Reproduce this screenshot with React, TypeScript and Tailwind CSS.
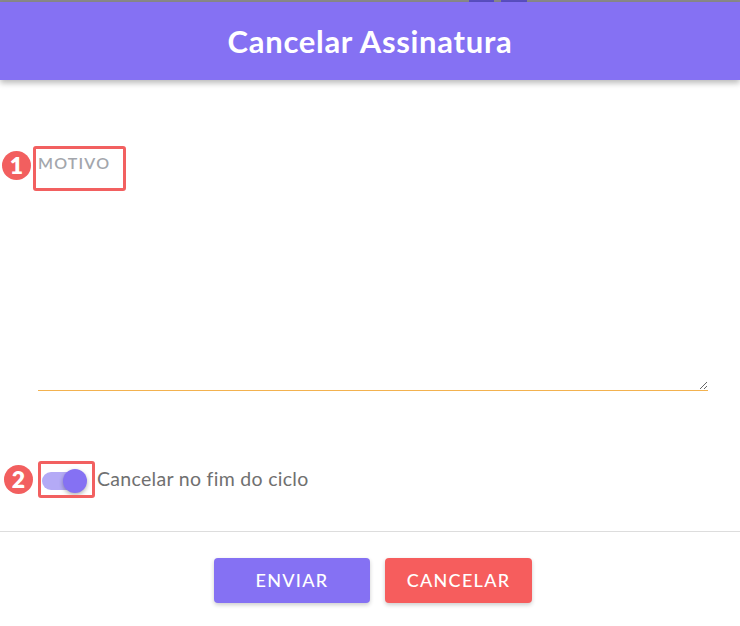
import { useState } from 'react';

function Badge({ n, className }: { n: string; className: string }) {
  return (
    <div
      className={`absolute w-[29px] h-[29px] rounded-full bg-[#f25f5f] text-white flex items-center justify-center text-[23px] font-extrabold leading-none ${className}`}
    >
      {n}
    </div>
  );
}

export default function App() {
  const [atEnd, setAtEnd] = useState(true);

  return (
    <div className="relative w-[740px] h-[626px] bg-white overflow-hidden font-['Lato',sans-serif]">
      <div className="h-[2px] bg-[#8a8a8a] flex">
        <div className="w-[469px]" />
        <div className="w-[25px] bg-[#5a4fc2]" />
        <div className="w-[7px]" />
        <div className="w-[26px] bg-[#5a4fc2]" />
      </div>
      <header className="h-[78px] bg-[#8571f3] flex items-center justify-center shadow-[0_3px_6px_rgba(0,0,0,0.28)] relative z-10">
        <h1 className="text-white text-[31px] font-bold tracking-[0.7px]">Cancelar Assinatura</h1>
      </header>

      <div className="px-[38px] pt-[70px]">
        <textarea
          placeholder="MOTIVO"
          className="block w-[670px] h-[241px] p-0 pt-[1px] text-[16px] leading-[24px] text-[#555] font-semibold tracking-[1.2px] uppercase placeholder:text-[#a3a6ac] border-0 border-b border-[#f3b24f] outline-none bg-transparent"
        />

        <div className="mt-[72px] flex items-center h-[36px]">
          <button
            type="button"
            onClick={() => setAtEnd(!atEnd)}
            className="relative w-[52px] h-[36px] flex items-center shrink-0"
          >
            <span className="ml-[4px] w-[44px] h-[18px] rounded-full bg-[#b4aaf6]" />
            <span
              className={`absolute top-[6px] w-[24px] h-[24px] rounded-full shadow-[0_2px_4px_rgba(0,0,0,0.3)] ${
                atEnd ? 'left-[25px] bg-[#8571f3]' : 'left-[2px] bg-white'
              }`}
            />
          </button>
          <span className="ml-[7px] -mt-[5px] text-[19.5px] tracking-[0.3px] text-[#707070]">Cancelar no fim do ciclo</span>
        </div>
      </div>

      <div className="mt-[32px] border-t border-[#dddddd]" />

      <div className="mt-[26px] pl-[6px] flex justify-center gap-[15px]">
        <button
          type="button"
          className="w-[156px] h-[45px] rounded-[4px] bg-[#8571f3] text-white text-[18px] font-medium tracking-[1.3px] shadow-[0_2px_4px_rgba(0,0,0,0.2)]"
        >
          ENVIAR
        </button>
        <button
          type="button"
          className="w-[147px] h-[45px] rounded-[4px] bg-[#f65d5d] text-white text-[18px] font-medium tracking-[1.3px] shadow-[0_2px_4px_rgba(0,0,0,0.2)]"
        >
          CANCELAR
        </button>
      </div>

      <div className="absolute left-[33px] top-[146px] w-[93px] h-[45px] border-[3px] border-[#f26060] rounded-[3px] pointer-events-none" />
      <Badge n="1" className="left-[2px] top-[151px]" />

      <div className="absolute left-[38px] top-[461px] w-[57px] h-[37px] border-[3px] border-[#f26060] rounded-[3px] pointer-events-none" />
      <Badge n="2" className="left-[4px] top-[465px]" />
    </div>
  );
}
